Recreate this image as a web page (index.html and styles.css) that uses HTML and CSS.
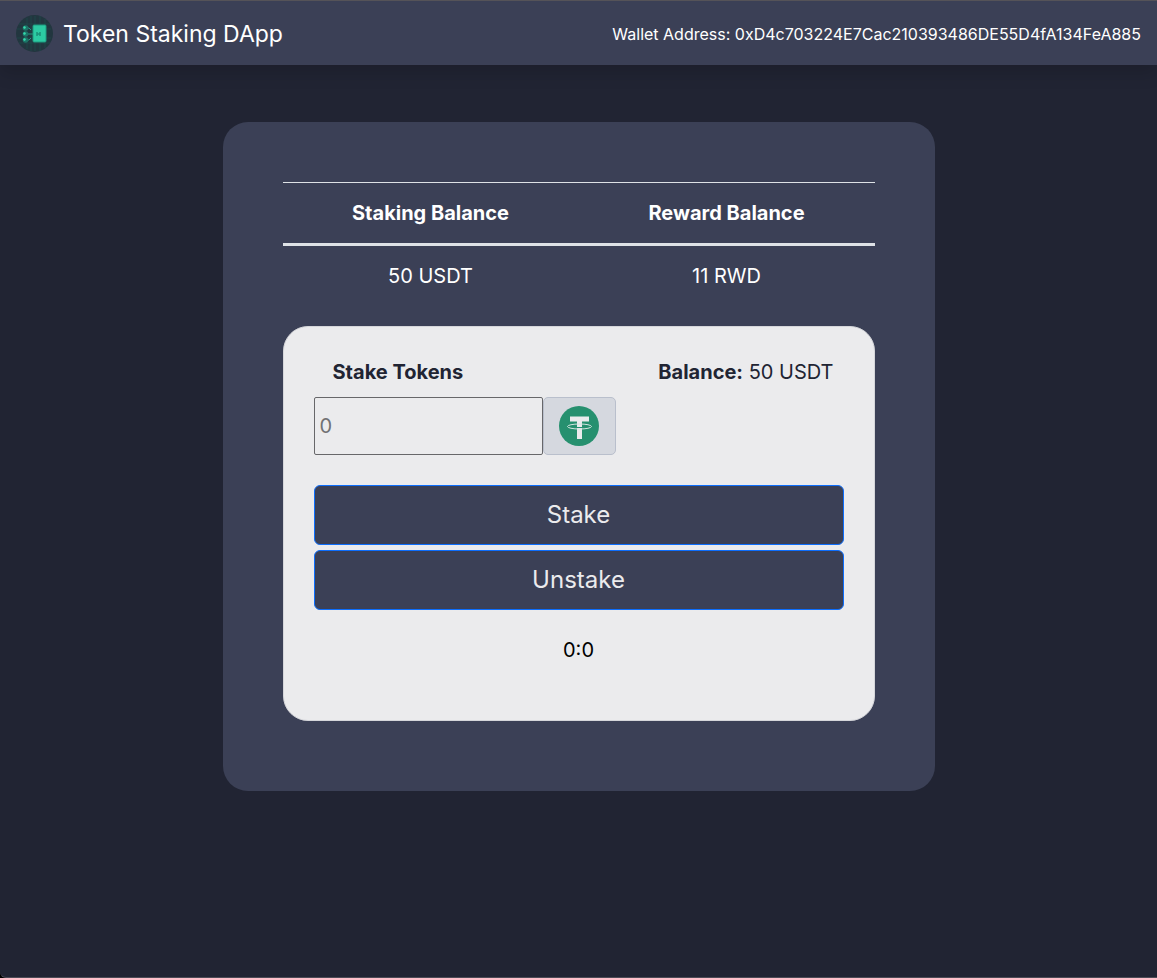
FILE: index.html
```html
<!DOCTYPE html>
<html lang="en">
<head>
<meta charset="utf-8">
<meta name="viewport" content="width=device-width, initial-scale=1">
<title>Token Staking DApp</title>
<link rel="stylesheet" href="styles.css">
</head>
<body>
<div class="app">
  <header class="navbar">
    <a class="brand" href="#">
      <svg class="brand-logo" viewBox="0 0 37 37" aria-hidden="true">
        <circle cx="18.500" cy="18.500" r="18.500" fill="#22363f"/>
        <path d="M11 3v31M15 1v35M19 1v8M19 28v8M24 1v8M24 28v8M29 4v6M29 28v5M3 9h31M1 14h34M1 23h34M3 28h31" stroke="#1e5452" stroke-width="1" opacity=".5"/>
        <path d="M10 13h3l2 2M10 19h7M10 25h3l2-2" stroke="#279b82" stroke-width="1" fill="none"/>
        <g fill="#1c7467"><circle cx="9.500" cy="13" r="2.800"/><circle cx="9.500" cy="19" r="2.800"/><circle cx="9.500" cy="25" r="2.800"/></g>
        <path d="M7 12l2-1 1 2-2 1zM7 18l2-1 1 2-2 1zM7 24l2-1 1 2-2 1z" fill="#35d9ac"/>
        <rect x="17" y="10" width="13" height="17" rx="1" fill="#2ccba3" stroke="#1d9c80"/>
        <path d="M21 17v4M24 17v4M21 19h3" stroke="#1b9179" stroke-width="1.500"/>
      </svg>
      <span>Token Staking DApp</span>
    </a>
    <span class="wallet">Wallet Address: 0xD4c703224E7Cac210393486DE55D4fA134FeA885</span>
  </header>
  <main class="panel">
    <table class="balances">
      <thead><tr><th scope="col">Staking Balance</th><th scope="col">Reward Balance</th></tr></thead>
      <tbody><tr><td>50 USDT</td><td>11 RWD</td></tr></tbody>
    </table>
    <form class="stake-card">
      <div class="stake-head">
        <label for="amount">Stake Tokens</label>
        <span><b>Balance:</b> 50 USDT</span>
      </div>
      <div class="amount-group">
        <input class="amount" id="amount" type="text" placeholder="0">
        <div class="token">
          <svg class="token-icon" viewBox="0 0 40 40" role="img" aria-label="Tether">
            <circle cx="20" cy="20" r="20" fill="#26906f"/>
            <path d="M11 10.500h19v5h-7v17.500h-5V15.500h-7z" fill="#ebebed"/>
            <ellipse cx="20.500" cy="20.500" rx="12" ry="2.500" fill="none" stroke="#d5e5e1" stroke-width="1"/>
            <path d="M18 21.500h5" stroke="#26906f" stroke-width="1"/>
          </svg>
        </div>
      </div>
      <button class="action" type="button">Stake</button>
      <button class="action" type="button">Unstake</button>
      <div class="timer">0:0</div>
    </form>
  </main>
</div>
</body>
</html>
```
FILE: styles.css
```css
* { box-sizing: border-box; }
html { background: #000; }
body {
  margin: 0;
  color: #fff;
  font-family: Inter, "Liberation Sans", sans-serif;
  font-size: 20px;
  line-height: 30px;
}
.app {
  min-height: 100vh;
  background: #212433;
  border-bottom: 1px solid #4c4b56;
  border-bottom-left-radius: 6px;
}
.navbar {
  display: flex;
  align-items: center;
  justify-content: space-between;
  min-height: 65px;
  padding: 1px 16px 0;
  background: #3b4056;
  border-top: 1px solid #555358;
  box-shadow: 0 8px 16px rgba(0, 0, 0, .15);
}
.brand {
  display: flex;
  align-items: center;
  gap: 10px;
  color: #fff;
  font-size: 23px;
  text-decoration: none;
}
.brand-logo { width: 37px; height: 37px; }
.wallet { font-size: 16px; }
.panel {
  width: calc(100% - 32px);
  max-width: 712px;
  margin: 57px auto 0;
  padding: 60px 60px 70px;
  background: #3b4056;
  border-radius: 25px;
}
.balances {
  width: 100%;
  border-collapse: collapse;
  table-layout: fixed;
  text-align: center;
}
.balances th {
  padding: 15px;
  font-weight: 700;
  border-top: 1px solid #dee2e6;
  border-bottom: 3px solid #dee2e6;
}
.balances td { padding: 15px; }
.stake-card {
  display: flex;
  flex-direction: column;
  margin-top: 20px;
  padding: 30px;
  color: #212433;
  background: #ebebed;
  border: 1px solid #d5d6da;
  border-radius: 25px;
}
.stake-head {
  display: flex;
  justify-content: space-between;
  padding: 0 10px 0 19px;
}
.stake-head label, .stake-head b { font-weight: 700; }
.amount-group { display: flex; margin: 10px 0 30px; }
.amount {
  width: 229px;
  min-width: 0;
  height: 58px;
  padding: 0 5px;
  font: inherit;
  color: #495057;
  background: transparent;
  border: 1px solid #67676a;
  border-radius: 2px;
}
.amount::placeholder { color: #717174; opacity: 1; }
.token {
  display: flex;
  align-items: center;
  padding: 0 16px 0 15px;
  background: #d5d8df;
  border: 1px solid #b9bfcc;
  border-radius: 5px;
}
.token-icon { width: 40px; height: 40px; }
.action {
  height: 60px;
  margin-bottom: 5px;
  padding: 0;
  font: inherit;
  font-size: 24px;
  color: #ebebed;
  background: #3b4056;
  border: 1px solid #0d6efd;
  border-radius: 6px;
}
.timer {
  margin: 20px 0 25px;
  color: #000;
  text-align: center;
}
```
